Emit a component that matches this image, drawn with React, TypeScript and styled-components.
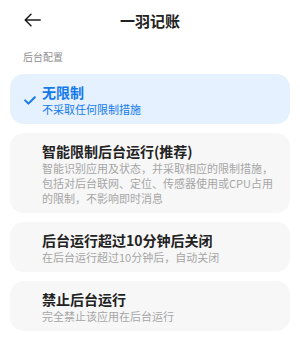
import React from "react";
import styled, { createGlobalStyle } from "styled-components";

const GlobalStyle = createGlobalStyle`
  html, body { margin: 0; padding: 0; background: #ffffff; }
  body { font-family: "Noto Sans CJK SC", "Noto Sans", sans-serif; -webkit-font-smoothing: antialiased; }
  * { box-sizing: border-box; }
`;

const Page = styled.div`
  width: 300px;
  height: 342px;
  background: #ffffff;
  display: flex;
  flex-direction: column;
`;

const Header = styled.header`
  height: 42px;
  display: grid;
  grid-template-columns: 1fr auto 1fr;
  align-items: center;
  padding: 0 24px;
`;

const BackButton = styled.button`
  justify-self: start;
  display: flex;
  align-items: center;
  padding: 0;
  border: 0;
  background: none;
  color: #1c1c1c;
  margin-top: -2px;
`;

const Title = styled.h1`
  margin: 0;
  font-size: 15px;
  line-height: 20px;
  font-weight: 600;
  color: #222222;
`;

const SectionLabel = styled.div`
  margin: 8px 0 10px 23px;
  font-size: 10px;
  line-height: 14px;
  color: #8f8f8f;
`;

const List = styled.div`
  display: flex;
  flex-direction: column;
  gap: 9px;
  padding: 0 10px;
`;

const Card = styled.div<{ $active?: boolean }>`
  position: relative;
  border-radius: 14px;
  padding: 8px 14px 7px 32px;
  background: ${(p) => (p.$active ? "#e5f1fe" : "#f7f7f7")};
`;

const Check = styled.svg`
  position: absolute;
  left: 14px;
  top: 50%;
  margin-top: -3px;
`;

const CardTitle = styled.div<{ $active?: boolean }>`
  font-size: 14px;
  line-height: 20px;
  font-weight: 600;
  color: ${(p) => (p.$active ? "#1479ea" : "#222222")};
`;

const CardText = styled.div<{ $active?: boolean }>`
  font-size: 11px;
  line-height: 15px;
  color: ${(p) => (p.$active ? "#1479ea" : "#a6a6a6")};
  white-space: nowrap;
`;

const options = [
  { title: "无限制", lines: ["不采取任何限制措施"], active: true },
  {
    title: "智能限制后台运行(推荐)",
    lines: [
      "智能识别应用及状态，并采取相应的限制措施，",
      "包括对后台联网、定位、传感器使用或CPU占用",
      "的限制，不影响即时消息",
    ],
  },
  { title: "后台运行超过10分钟后关闭", lines: ["在后台运行超过10分钟后，自动关闭"] },
  { title: "禁止后台运行", lines: ["完全禁止该应用在后台运行"] },
];

export default function App() {
  return (
    <>
      <GlobalStyle />
      <Page>
        <Header>
          <BackButton aria-label="返回">
            <svg width="17" height="14" viewBox="0 0 17 14" fill="none" stroke="currentColor" strokeWidth="1.5" strokeLinecap="round" strokeLinejoin="round">
              <path d="M16.2 7H1.2M7 1.2L1.2 7L7 12.8" />
            </svg>
          </BackButton>
          <Title>一羽记账</Title>
          <span />
        </Header>
        <SectionLabel>后台配置</SectionLabel>
        <List>
          {options.map((o) => (
            <Card key={o.title} $active={o.active}>
              {o.active && (
                <Check width="12" height="9" viewBox="0 0 12 9" fill="none" stroke="#1479ea" strokeWidth="2" strokeLinecap="round" strokeLinejoin="round">
                  <path d="M1.2 4.4L4.4 7.6L10.8 1.2" />
                </Check>
              )}
              <CardTitle $active={o.active}>{o.title}</CardTitle>
              {o.lines.map((l) => (
                <CardText key={l} $active={o.active}>{l}</CardText>
              ))}
            </Card>
          ))}
        </List>
      </Page>
    </>
  );
}
